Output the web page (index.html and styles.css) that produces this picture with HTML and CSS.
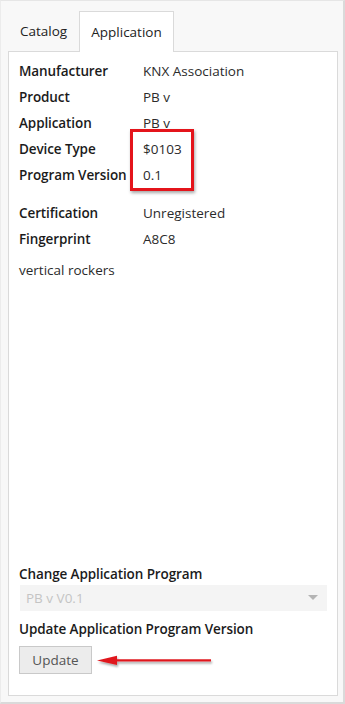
FILE: index.html
```html
<!DOCTYPE html>
<html>
<head>
<meta charset="utf-8">
<link rel="stylesheet" href="styles.css">
</head>
<body>
<div class="window">
  <div class="tabs">
    <div class="tab">Catalog</div>
    <div class="tab active">Application</div>
  </div>
  <div class="panel">
    <div class="props">
      <div class="row"><span class="label">Manufacturer</span><span class="value">KNX Association</span></div>
      <div class="row"><span class="label">Product</span><span class="value">PB v</span></div>
      <div class="row"><span class="label">Application</span><span class="value">PB v</span></div>
      <div class="highlight-group">
        <div class="row"><span class="label">Device Type</span><span class="value">$0103</span></div>
        <div class="row"><span class="label">Program Version</span><span class="value">0.1</span></div>
        <div class="redbox"></div>
      </div>
    </div>
    <div class="props props-2">
      <div class="row"><span class="label">Certification</span><span class="value">Unregistered</span></div>
      <div class="row"><span class="label">Fingerprint</span><span class="value">A8C8</span></div>
    </div>
    <div class="desc">vertical rockers</div>

    <div class="bottom">
      <div class="section-title">Change Application Program</div>
      <div class="select">
        <span>PB v V0.1</span>
        <svg class="caret" width="10" height="6" viewBox="0 0 10 6"><path d="M0 0 L10 0 L5 5 Z" fill="#b4b4b4"/></svg>
      </div>
      <div class="section-title title-2">Update Application Program Version</div>
      <div class="button-row">
        <button class="btn">Update</button>
        <svg class="arrow" width="124" height="16" viewBox="0 0 124 16">
          <defs>
            <filter id="sh" x="-10%" y="-50%" width="120%" height="220%">
              <feDropShadow dx="1" dy="2" stdDeviation="1" flood-color="#000" flood-opacity="0.35"/>
            </filter>
          </defs>
          <g filter="url(#sh)">
            <path d="M20 6.2 L115 6.2 L115 8.6 L20 8.6 Z" fill="#e0191f"/>
            <path d="M1 7.4 L21 2.8 L21 12 Z" fill="#e0191f"/>
          </g>
        </svg>
      </div>
    </div>
  </div>
</div>
</body>
</html>
```

FILE: styles.css
```css
* { box-sizing: border-box; }
html, body { margin: 0; padding: 0; }
body {
  width: 345px;
  height: 704px;
  font-family: "Open Sans", "Noto Sans", sans-serif;
  color: #1b1b1b;
  background: #fff;
}
.window {
  width: 345px;
  height: 704px;
  background: #f8f8f8;
  border-top: 1px solid #e6e6e6;
  border-left: 1px solid #ececec;
  border-right: 2px solid #dadada;
  border-bottom: 2px solid #dadada;
  padding: 10px 5px 6px 7px;
  display: flex;
  flex-direction: column;
}
.tabs {
  display: flex;
  height: 40px;
  align-items: stretch;
}
.tab {
  font-size: 13.5px;
  line-height: 40px;
  padding: 0;
  color: #222;
  width: 71px;
  text-align: center;
}
.tab.active {
  width: 95px;
  background: #fff;
  border: 1px solid #dadada;
  border-bottom: none;
  margin-bottom: -1px;
  position: relative;
  z-index: 1;
  height: 41px;
}
.panel {
  flex: 1;
  background: #fff;
  border: 1px solid #dadada;
  padding: 6px 10px 21px 10px;
  display: flex;
  flex-direction: column;
}
.row {
  display: flex;
  height: 26px;
  align-items: center;
  font-size: 13.5px;
}
.label {
  width: 124px;
  flex: none;
  font-weight: 600;
  color: #1b1b1b;
  white-space: nowrap;
  letter-spacing: -0.1px;
}
.value {
  color: #2b2b2b;
}
.highlight-group { position: relative; }
.redbox {
  position: absolute;
  left: 111px;
  top: -7px;
  width: 64px;
  height: 62px;
  border: 3px solid #e4141b;
  box-shadow: 1px 2px 3px rgba(0,0,0,0.35);
}
.props-2 { margin-top: 12px; }
.desc {
  font-size: 13.5px;
  color: #2b2b2b;
  margin-top: 5px;
  height: 26px;
  line-height: 26px;
}
.bottom {
  margin-top: auto;
  display: flex;
  flex-direction: column;
}
.section-title {
  font-size: 13.5px;
  font-weight: 600;
  line-height: 20px;
  color: #1b1b1b;
  letter-spacing: -0.1px;
}
.select {
  margin-top: 1px;
  height: 26px;
  background: #f4f4f4;
  margin-left: 1px;
  display: flex;
  align-items: center;
  justify-content: space-between;
  padding: 0 9px 0 6px;
  font-size: 13.5px;
  color: #c4c4c4;
}
.title-2 { margin-top: 8px; }
.button-row {
  margin-top: 7px;
  display: flex;
  align-items: center;
}
.btn {
  width: 73px;
  height: 28px;
  background: #ececec;
  border: 1px solid #c9c9c9;
  font-family: inherit;
  font-size: 13.5px;
  color: #555;
  padding: 0;
}
.arrow {
  margin-left: 4px;
  margin-top: 2px;
}
```
